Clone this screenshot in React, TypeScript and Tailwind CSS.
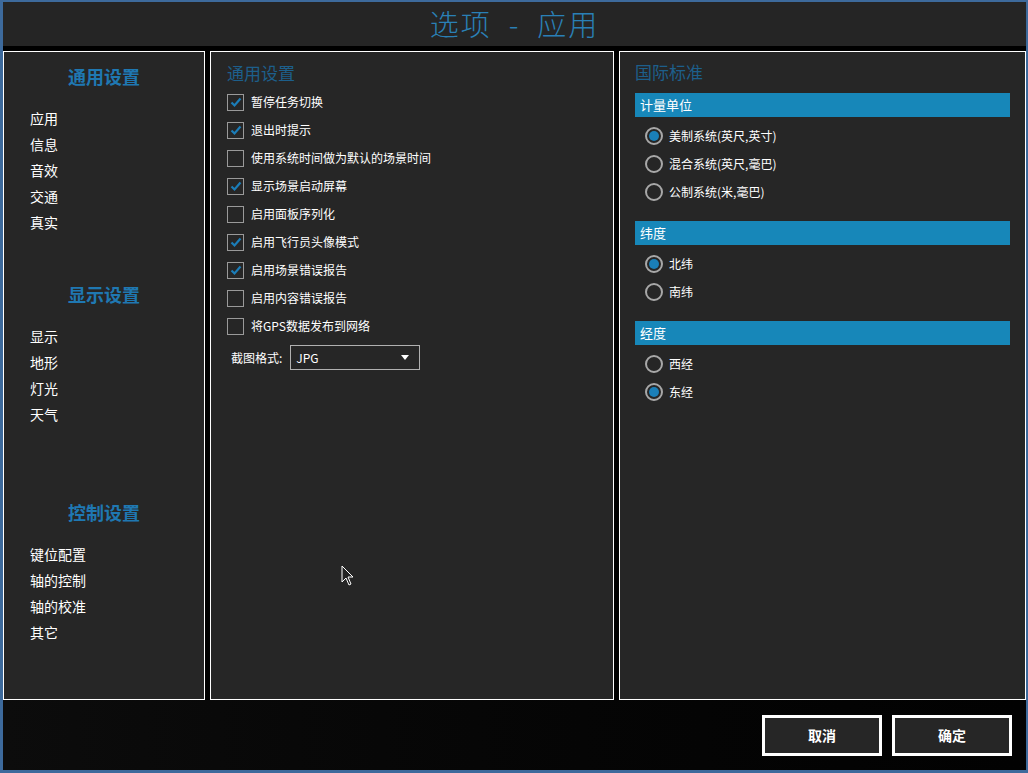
import React from 'react'

const font = { fontFamily: '"Noto Sans CJK SC", "Noto Sans", sans-serif' }

function Check({ on }: { on: boolean }) {
  return (
    <span className="flex h-[17px] w-[17px] items-center justify-center border border-[#9a9a9a] bg-[#262626]">
      {on && (
        <svg width="12" height="12" viewBox="0 0 12 12">
          <path d="M1.5 6.5 L4.5 9.5 L10.5 2.5" fill="none" stroke="#1b7db8" strokeWidth="2.2" />
        </svg>
      )}
    </span>
  )
}

function Radio({ on }: { on: boolean }) {
  return (
    <span className="flex h-[18px] w-[18px] items-center justify-center rounded-full border-2 border-[#a8a8a8]">
      {on && <span className="h-[10px] w-[10px] rounded-full bg-[#1a7fb8]" />}
    </span>
  )
}

const groups = [
  { title: '通用设置', items: ['应用', '信息', '音效', '交通', '真实'], mt: 'mt-[12px]' },
  { title: '显示设置', items: ['显示', '地形', '灯光', '天气'], mt: 'mt-[47px]' },
  { title: '控制设置', items: ['键位配置', '轴的控制', '轴的校准', '其它'], mt: 'mt-[73px]' },
]

const checks: [string, boolean][] = [
  ['暂停任务切换', true],
  ['退出时提示', true],
  ['使用系统时间做为默认的场景时间', false],
  ['显示场景启动屏幕', true],
  ['启用面板序列化', false],
  ['启用飞行员头像模式', true],
  ['启用场景错误报告', true],
  ['启用内容错误报告', false],
  ['将GPS数据发布到网络', false],
]

const sections: { title: string; opts: [string, boolean][]; mt: string }[] = [
  { title: '计量单位', opts: [['美制系统(英尺,英寸)', true], ['混合系统(英尺,毫巴)', false], ['公制系统(米,毫巴)', false]], mt: 'mt-[9px]' },
  { title: '纬度', opts: [['北纬', true], ['南纬', false]], mt: 'mt-[15px]' },
  { title: '经度', opts: [['西经', false], ['东经', true]], mt: 'mt-[15px]' },
]

export default function App() {
  return (
    <div className="h-[773px] w-[1028px] overflow-hidden bg-[#3d6a9c] pt-[2px] pl-[3px] pr-[2px] pb-[3px]" style={font}>
      <div className="relative flex h-full flex-col bg-black">
        <div className="flex h-[44px] items-center justify-center bg-[#252525] text-[29px] font-light text-[#2a80b6]">
          <span className="tracking-[2px]">选项 &nbsp;-&nbsp; 应用</span>
        </div>
        <div className="mt-[5px] flex h-[649px] gap-[5px]">
          <div className="w-[202px] border border-white bg-[#262626]">
            {groups.map(g => (
              <div key={g.title} className={g.mt}>
                <div className="text-center text-[18px] font-bold leading-[24px] text-[#1f78b2]">{g.title}</div>
                <div className="mt-[17px] flex flex-col pl-[26px] text-[14px] leading-[26px] text-white">
                  {g.items.map(i => <span key={i}>{i}</span>)}
                </div>
              </div>
            ))}
          </div>
          <div className="w-[404px] border border-white bg-[#262626] px-[16px] pt-[9px]">
            <div className="text-[17px] leading-[24px] text-[#1d5f8b]">通用设置</div>
            <div className="mt-[3px] flex flex-col">
              {checks.map(([label, on]) => (
                <div key={label} className="flex h-[28px] items-center gap-[7px] text-[12px] text-white">
                  <Check on={on} />
                  <span>{label}</span>
                </div>
              ))}
            </div>
            <div className="mt-[5px] flex items-center gap-[8px] pl-[4px] text-[12px] text-white">
              <span>截图格式:</span>
              <div className="flex h-[25px] w-[130px] items-center justify-between border border-[#b0b0b0] bg-[#262626] px-[5px]">
                <span>JPG</span>
                <svg width="8" height="5" viewBox="0 0 8 5" className="mr-[5px]"><path d="M0 0 H8 L4 5 Z" fill="#fff" /></svg>
              </div>
            </div>
          </div>
          <div className="flex-1 border border-white bg-[#262626] pl-[15px] pr-[15px] pt-[8px]">
            <div className="text-[17px] leading-[24px] text-[#1d5f8b]">国际标准</div>
            {sections.map(s => (
              <div key={s.title} className={s.mt}>
                <div className="flex h-[24px] items-center bg-[#1787b9] pl-[5px] text-[13px] text-white">{s.title}</div>
                <div className="mt-[5px] flex flex-col pl-[10px]">
                  {s.opts.map(([label, on]) => (
                    <div key={label} className="flex h-[28px] items-center gap-[6px] text-[12px] text-white">
                      <Radio on={on} />
                      <span>{label}</span>
                    </div>
                  ))}
                </div>
              </div>
            ))}
          </div>
        </div>
        <div className="flex flex-1 items-start justify-end gap-[10px] bg-gradient-to-r from-[#0c0c0c] to-[#020202] pr-[14px] pt-[15px]">
          {['取消', '确定'].map(b => (
            <button key={b} className="flex h-[41px] w-[120px] items-center justify-center border-[3px] border-white bg-[#262626] text-[14px] font-bold text-white">
              {b}
            </button>
          ))}
        </div>
        <svg className="absolute left-[338px] top-[563px]" width="14" height="22" viewBox="0 0 14 22">
          <path d="M1 1 V17 L5 13 L8 20 L10 19 L7 12 H12 Z" fill="#222" stroke="#fff" strokeWidth="1" />
        </svg>
      </div>
    </div>
  )
}
